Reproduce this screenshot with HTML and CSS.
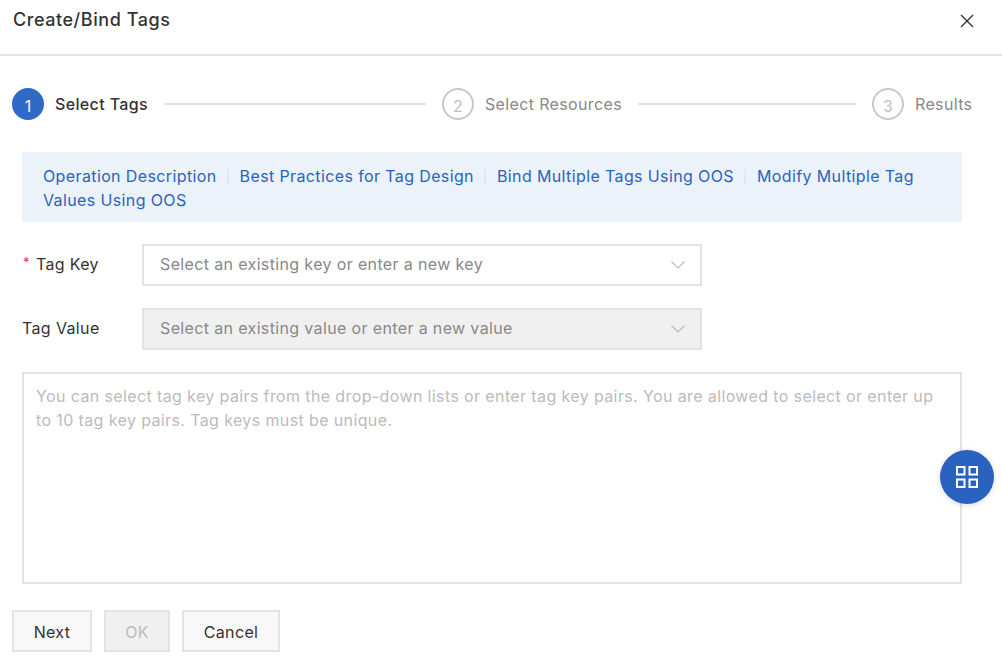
FILE: index.html
```html
<!DOCTYPE html>
<html>
  <head>
    <meta charset="utf-8"/>
    <title>Create/Bind Tags</title>
    <link rel="stylesheet" href="styles.css">
  </head>
  <body>
    <div class="dialog">

      <div class="dialog-header">
        <div class="dialog-title">Create/Bind Tags</div>
        <svg class="dialog-close" width="14" height="14" viewBox="0 0 14 14">
          <path d="M1 1L13 13M13 1L1 13" fill="none" stroke="#333" stroke-width="1.4"/>
        </svg>
      </div>

      <div class="steps">
        <div class="step-num step-num-active">1</div>
        <div class="step-label step-label-active">Select Tags</div>
        <div class="step-line step-line-first"></div>
        <div class="step-num">2</div>
        <div class="step-label">Select Resources</div>
        <div class="step-line step-line-second"></div>
        <div class="step-num">3</div>
        <div class="step-label">Results</div>
      </div>

      <div class="notice">
        <a href="#">Operation Description</a><span class="notice-sep"></span><a href="#">Best Practices for Tag Design</a><span class="notice-sep"></span><a href="#">Bind Multiple Tags Using OOS</a><span class="notice-sep"></span><a href="#">Modify Multiple Tag</a> <a href="#">Values Using OOS</a>
      </div>

      <div class="field">
        <label class="field-label"><span class="required">*</span>Tag Key</label>
        <div class="select">
          <span>Select an existing key or enter a new key</span>
          <svg width="14" height="8" viewBox="0 0 14 8"><path d="M0.5 0.5L7 7L13.5 0.5" fill="none" stroke="#bbb" stroke-width="1.2"/></svg>
        </div>
      </div>

      <div class="field">
        <label class="field-label">Tag Value</label>
        <div class="select select-disabled">
          <span>Select an existing value or enter a new value</span>
          <svg width="14" height="8" viewBox="0 0 14 8"><path d="M0.5 0.5L7 7L13.5 0.5" fill="none" stroke="#bbb" stroke-width="1.2"/></svg>
        </div>
      </div>

      <div class="tag-box">You can select tag key pairs from the drop-down lists or enter tag key pairs. You are allowed to select or enter up to 10 tag key pairs. Tag keys must be unique.</div>

      <div class="dialog-footer">
        <button class="btn btn-next">Next</button>
        <button class="btn btn-ok" disabled>OK</button>
        <button class="btn btn-cancel">Cancel</button>
      </div>

      <div class="fab">
        <svg width="22" height="22" viewBox="0 0 22 22" fill="none" stroke="#fff" stroke-width="2">
          <rect x="1" y="1" width="7.5" height="7.5"/>
          <rect x="13.5" y="1" width="7.5" height="7.5"/>
          <rect x="1" y="13.5" width="7.5" height="7.5"/>
          <rect x="13.5" y="13.5" width="7.5" height="7.5"/>
        </svg>
      </div>

    </div>
  </body>
</html>
```

FILE: styles.css
```css
body
{
margin: 0;
background-color: #FFFFFF;
}

.dialog
{
position: relative;
width: 1002px;
height: 666px;
overflow: hidden;
font-family: Inter, "Liberation Sans", sans-serif;
font-size: 16px;
letter-spacing: 0.36px;
color: #333333;
}

.dialog-header
{
display: flex;
justify-content: space-between;
height: 56px;
padding: 8px 28px 0 13px;
box-sizing: border-box;
border-bottom: 2px solid #E3E3E3;
}

.dialog-title
{
font-size: 18px;
line-height: 24px;
font-weight: 500;
letter-spacing: 0.55px;
}

.dialog-close
{
margin-top: 6px;
}

.steps
{
display: flex;
align-items: center;
margin-top: 32px;
padding-left: 12px;
}

.step-num
{
width: 32px;
height: 32px;
box-sizing: border-box;
border: 2px solid #C8C8C8;
border-radius: 50%;
color: #C0C0C0;
font-size: 16px;
line-height: 32px;
letter-spacing: 0;
text-align: center;
}

.step-num-active
{
background-color: #2F6BC6;
border-color: #2F6BC6;
color: #FFFFFF;
}

.step-label
{
margin-left: 11px;
color: #888888;
white-space: nowrap;
}

.step-label-active
{
color: #333333;
font-weight: 500;
}

.step-line
{
height: 2px;
margin: 0 16px;
background-color: #E3E3E3;
}

.step-line-first
{
width: 262px;
}

.step-line-second
{
width: 218px;
}

.notice
{
width: 940px;
height: 70px;
box-sizing: border-box;
margin: 32px 0 0 22px;
padding: 12px 40px 0 21px;
background-color: #EBF2FA;
line-height: 24px;
letter-spacing: 0.38px;
}

.notice a
{
color: #2A62BF;
text-decoration: none;
}

.notice-sep
{
display: inline-block;
width: 2px;
height: 15px;
margin: 0 10.5px;
background-color: #E3E6EA;
vertical-align: -2px;
}

.field
{
display: flex;
align-items: center;
margin: 22px 0 0 22px;
}

.field-label
{
width: 120px;
padding-bottom: 2px;
color: #333333;
}

.required
{
margin-right: 6px;
margin-left: 1px;
color: #E53935;
font-size: 13px;
vertical-align: 3px;
}

.select
{
display: flex;
align-items: center;
justify-content: space-between;
width: 560px;
height: 42px;
box-sizing: border-box;
padding: 0 15px 2px 16px;
border: 2px solid #E3E3E3;
color: #888888;
}

.select svg
{
margin-top: 1px;
}

.select-disabled
{
background-color: #F0F0F0;
}

.tag-box
{
width: 940px;
height: 212px;
box-sizing: border-box;
margin: 22px 0 0 22px;
padding: 10px 12px;
border: 2px solid #E3E3E3;
color: #BBBBBB;
line-height: 24px;
letter-spacing: 0.38px;
}

.dialog-footer
{
display: flex;
gap: 12px;
margin-top: 26px;
padding-left: 12px;
}

.btn
{
height: 42px;
box-sizing: border-box;
border: 2px solid #E3E3E3;
background-color: #F8F8F8;
color: #333333;
font-family: inherit;
font-size: 16px;
letter-spacing: inherit;
padding: 2px 0 0;
}

.btn-next
{
width: 80px;
}

.btn-ok
{
width: 66px;
background-color: #F0F0F0;
color: #BBBBBB;
}

.btn-cancel
{
width: 98px;
}

.fab
{
position: absolute;
left: 940px;
top: 450px;
display: flex;
align-items: center;
justify-content: center;
width: 54px;
height: 54px;
border-radius: 50%;
background-color: #2A62BF;
box-shadow: 0 1px 6px rgba(0, 0, 0, 0.15);
}
```
